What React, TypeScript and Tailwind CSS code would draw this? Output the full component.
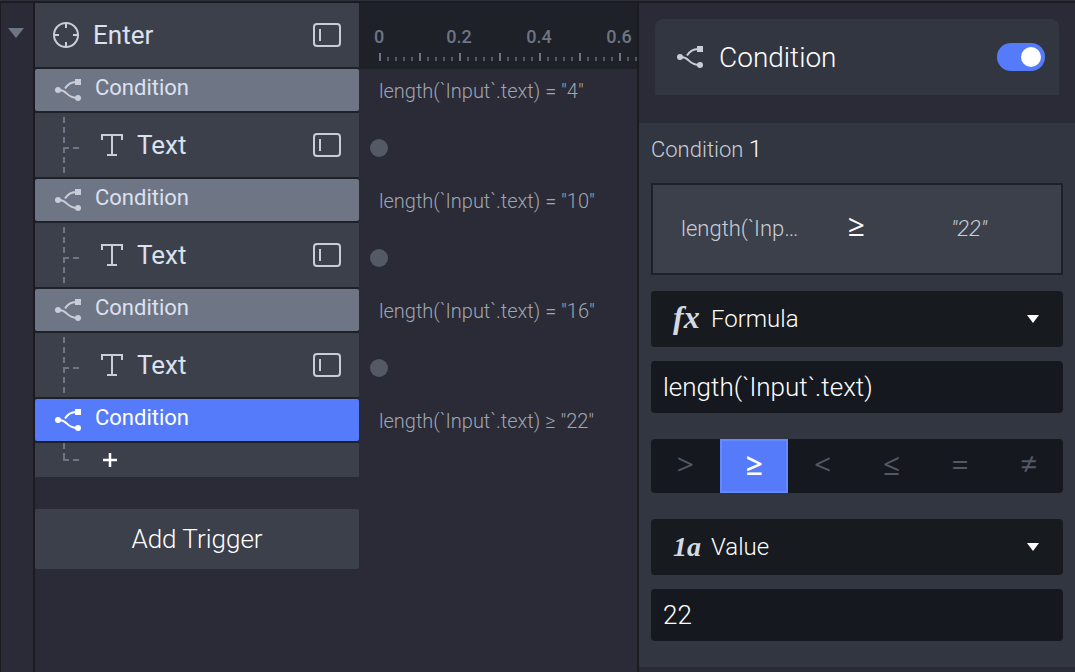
import { useState } from 'react';

const steps = [
  { expression: 'length(`Input`.text) = "4"' },
  { expression: 'length(`Input`.text) = "10"' },
  { expression: 'length(`Input`.text) = "16"' },
];

const operators = [
  { symbol: '>', label: 'Greater than' },
  { symbol: '≥', label: 'Greater than or equal' },
  { symbol: '<', label: 'Less than' },
  { symbol: '≤', label: 'Less than or equal' },
  { symbol: '=', label: 'Equal' },
  { symbol: '≠', label: 'Not equal' },
];

const rulerLabels = ['0', '0.2', '0.4', '0.6'];
const ticks = Array.from({ length: 200 }, (_, i) => i);

function ConditionIcon() {
  return (
    <svg width="26" height="22" viewBox="0 0 26 22" fill="none" className="shrink-0" aria-hidden="true">
      <path d="M3 11C13 10 10 19 23 19M10 9.5C12.5 5.5 15 3 21 3" stroke="currentColor" strokeWidth="2" />
      <circle cx="3" cy="11" r="3" fill="currentColor" />
      <circle cx="23" cy="19" r="3" fill="currentColor" />
      <path d="M20 0h6v6h-6z" fill="currentColor" />
    </svg>
  );
}

function TargetIcon() {
  return (
    <svg width="26" height="26" viewBox="0 0 26 26" fill="none" stroke="currentColor" strokeWidth="2" className="shrink-0" aria-hidden="true">
      <circle cx="13" cy="13" r="12" />
      <path d="M13 1v5M13 20v5M1 13h5M20 13h5" />
    </svg>
  );
}

function TextIcon() {
  return (
    <svg width="22" height="22" viewBox="0 0 22 22" fill="none" stroke="currentColor" strokeWidth="2" className="shrink-0" aria-hidden="true">
      <path d="M1 6V1h20v5M11 1v20M6 21h10" />
    </svg>
  );
}

function FrameIcon() {
  return (
    <svg width="28" height="24" viewBox="0 0 28 24" fill="none" stroke="currentColor" strokeWidth="2" aria-hidden="true">
      <rect x="1" y="1" width="26" height="22" rx="3" />
      <path d="M7 6v12" />
    </svg>
  );
}

function Branch() {
  return (
    <svg width="16" height="56" viewBox="0 0 16 56" fill="none" stroke="#6e7585" strokeWidth="2" className="shrink-0" aria-hidden="true">
      <path d="M1 0v56" strokeDasharray="6 4" />
      <path d="M0 31h16" strokeDasharray="6 4" />
    </svg>
  );
}

function Caret() {
  return (
    <svg width="12" height="8" viewBox="0 0 12 8" fill="currentColor" className="pointer-events-none shrink-0" aria-hidden="true">
      <path d="M0 0h12L6 8z" />
    </svg>
  );
}

function ConditionRow({ active = false }: { active?: boolean }) {
  return (
    <button
      type="button"
      className={`flex h-[42px] w-full items-center gap-3 rounded-xs pl-5 text-left ${
        active ? 'bg-[#557bfa] text-white' : 'bg-[#6e7585] text-[#c9cdd8]'
      }`}
    >
      <ConditionIcon />
      <span className={`pb-1 pl-0.5 text-[22px] leading-7 ${active ? 'text-white' : 'text-[#dce1f0]'}`}>Condition</span>
    </button>
  );
}

function TextRow() {
  return (
    <div className="flex h-16 items-center bg-[#3b404b] pr-[18px] pl-7 text-[#c9cdd8]">
      <Branch />
      <div className="flex flex-1 items-center gap-3 pl-[22px]">
        <TextIcon />
        <span className="pl-0.5 text-[26px] leading-8 text-[#dce1f0]">Text</span>
      </div>
      <button type="button" aria-label="Toggle frame">
        <FrameIcon />
      </button>
    </div>
  );
}

function TypeSelect({ glyph, label, value }: { glyph: string; label: string; value: string }) {
  const [type, setType] = useState(value);

  return (
    <div className="flex h-14 items-center rounded-sm bg-[#171a1e] pr-6 pl-[22px] text-white">
      <span
        className={`w-[38px] font-['Liberation_Serif',serif] leading-8 font-bold text-[#d5d9e3] italic ${
          glyph === 'fx' ? 'pb-1 text-[32px]' : 'text-[28px]'
        }`}
        aria-hidden="true"
      >
        {glyph}
      </span>
      <select
        aria-label={label}
        value={type}
        onChange={(e) => setType(e.target.value)}
        className="h-full flex-1 appearance-none bg-transparent text-2xl font-light outline-none"
      >
        <option value="Formula">Formula</option>
        <option value="Value">Value</option>
      </select>
      <Caret />
    </div>
  );
}

export default function App() {
  const [enabled, setEnabled] = useState(true);
  const [operator, setOperator] = useState('≥');
  const [formula, setFormula] = useState('length(`Input`.text)');
  const [value, setValue] = useState('22');

  return (
    <div className="flex min-h-screen flex-col bg-[#2a2b36] font-[Roboto,sans-serif]">
      <div className="h-[3px] border-b-2 border-[#1a1c21] bg-[#2d2f3a]" />

      <div className="flex flex-1">
        {/* Collapse gutter */}
        <div className="w-[35px] shrink-0 border-r-2 border-l border-[#1a1c21] pt-[25px] pl-[7px]">
          <button type="button" aria-label="Collapse" className="block text-[#6e7585]">
            <svg width="16" height="10" viewBox="0 0 16 10" fill="currentColor" aria-hidden="true">
              <path d="M0 0h16L8 10z" />
            </svg>
          </button>
        </div>

        {/* Trigger list */}
        <div className="w-[324px] shrink-0">
          <div className="flex flex-col gap-[2px] bg-[#1e2127]">
            <div className="flex h-16 items-center gap-3 bg-[#3b404b] pr-[18px] pl-[18px] text-[#c9cdd8]">
              <TargetIcon />
              <span className="flex-1 pl-0.5 text-[26px] leading-8 text-[#dce1f0]">Enter</span>
              <button type="button" aria-label="Toggle frame">
                <FrameIcon />
              </button>
            </div>
            {steps.map((step) => (
              <div key={step.expression} className="flex flex-col gap-[2px]">
                <ConditionRow />
                <TextRow />
              </div>
            ))}
            <ConditionRow active />
            <div className="flex h-[34px] items-start bg-[#3b404b] pl-7">
              <svg width="16" height="18" viewBox="0 0 16 18" fill="none" stroke="#6e7585" strokeWidth="2" aria-hidden="true">
                <path d="M1 0v6M1 10v7h5M10 17h6" />
              </svg>
              <button type="button" aria-label="Add response" className="ml-6 pt-[10px] text-white">
                <svg width="14" height="14" viewBox="0 0 14 14" stroke="currentColor" strokeWidth="2.5" aria-hidden="true">
                  <path d="M7 0v14M0 7h14" />
                </svg>
              </button>
            </div>
          </div>
          <button type="button" className="mt-8 h-[60px] w-full rounded-xs bg-[#3b404b] text-[26px] font-light text-white">
            Add Trigger
          </button>
        </div>

        {/* Timeline */}
        <div className="min-w-0 flex-1 overflow-hidden">
          <div className="h-[66px] overflow-hidden bg-[#1e2127] pt-[22px]">
            <div className="-ml-5 flex text-lg leading-6 font-medium text-[#6e7585]">
              {rulerLabels.map((label) => (
                <span key={label} className="w-20 shrink-0 text-center">
                  {label}
                </span>
              ))}
            </div>
            <svg width="1620" height="8" className="mt-1 ml-5 max-w-none" aria-hidden="true">
              {ticks.map((i) => (
                <rect
                  key={i}
                  x={i * 8}
                  y={i % 5 === 0 ? 0 : 4}
                  width="2"
                  height={i % 5 === 0 ? 8 : 4}
                  fill={i % 5 === 0 ? '#6e7585' : '#525864'}
                />
              ))}
            </svg>
          </div>
          {steps.map((step) => (
            <div key={step.expression} className="pl-5 text-xl font-light whitespace-nowrap text-[#a0a5b3]">
              <p className="h-11 leading-11">{step.expression}</p>
              <div className="flex h-[66px] items-center pt-1">
                <span className="-ml-[9px] size-[18px] rounded-full bg-[#535a66]" />
              </div>
            </div>
          ))}
          <p className="pl-5 text-xl leading-11 font-light whitespace-nowrap text-[#a0a5b3]">{'length(`Input`.text) ≥ "22"'}</p>
        </div>

        {/* Inspector */}
        <aside className="w-[438px] shrink-0 border-l-2 border-[#1a1c21]">
          <div className="h-[120px] px-4 pt-4">
            <div className="flex h-[76px] items-center rounded-t-lg bg-[#323640] pr-[14px] pl-[22px] text-[#c9cdd8]">
              <ConditionIcon />
              <h2 id="panel-title" className="flex-1 pt-0.5 pl-4 text-[28px] leading-9 font-light text-white">
                Condition
              </h2>
              <input
                type="checkbox"
                role="switch"
                aria-labelledby="panel-title"
                checked={enabled}
                onChange={(e) => setEnabled(e.target.checked)}
                className="h-7 w-12 cursor-pointer appearance-none rounded-full bg-[#525864] p-1 before:block before:size-5 before:rounded-full before:bg-white checked:bg-[#557bfa] checked:before:ml-5"
              />
            </div>
          </div>

          <section className="bg-[#323640] px-3 pt-3 pb-[26px]">
            <h3 className="h-7 text-[22px] leading-7 font-light text-[#c9cdd8]">
              Condition <span className="text-2xl leading-7 text-white">1</span>
            </h3>

            <div className="mt-5 flex h-[92px] items-center border-2 border-[#1e2127] bg-[#3b404b] pr-4 pl-7 text-[22px] font-light text-[#c9cdd8]">
              <span className="w-[138px] pb-0.5">{'length(`Inp…'}</span>
              <span className="w-[74px] pb-2 text-center font-['Open_Sans',sans-serif] text-[30px] leading-8 font-medium text-white">≥</span>
              <span className="flex-1 pb-0.5 text-center italic">"22"</span>
            </div>

            <div className="mt-4">
              <TypeSelect glyph="fx" label="Left operand type" value="Formula" />
            </div>
            <input
              type="text"
              aria-label="Formula"
              value={formula}
              onChange={(e) => setFormula(e.target.value)}
              className="mt-[14px] block h-[52px] w-full rounded-sm bg-[#15181f] px-3 text-[26px] font-light text-white outline-none"
            />

            <div className="mt-[26px] grid h-[54px] grid-cols-6 overflow-hidden rounded-sm bg-[#15181f]">
              {operators.map((op) => (
                <button
                  key={op.symbol}
                  type="button"
                  aria-label={op.label}
                  aria-pressed={operator === op.symbol}
                  onClick={() => setOperator(op.symbol)}
                  className={`border-2 pb-1 font-['Open_Sans',sans-serif] text-[30px] leading-8 ${
                    operator === op.symbol
                      ? 'border-[#658aff] bg-[#557bfa] font-semibold text-white'
                      : 'border-transparent text-[#525864]'
                  }`}
                >
                  {op.symbol}
                </button>
              ))}
            </div>

            <div className="mt-[26px]">
              <TypeSelect glyph="1a" label="Right operand type" value="Value" />
            </div>
            <input
              type="text"
              aria-label="Value"
              value={value}
              onChange={(e) => setValue(e.target.value)}
              className="mt-[14px] block h-[52px] w-full rounded-sm bg-[#15181f] px-3 text-[26px] font-light text-white outline-none"
            />
          </section>
        </aside>
      </div>
    </div>
  );
}
